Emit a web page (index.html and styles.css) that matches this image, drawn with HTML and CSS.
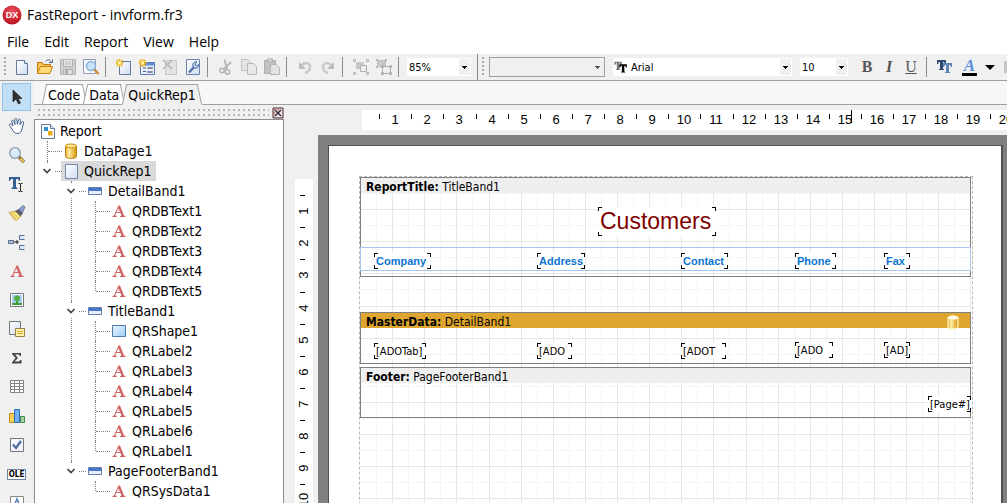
FILE: index.html
```html
<!DOCTYPE html>
<html lang="en">
<head>
<meta charset="utf-8">
<title>FastReport - invform.fr3</title>
<link rel="stylesheet" href="styles.css">
</head>
<body>
<svg class="sprite" aria-hidden="true">
  <defs>
    <linearGradient id="gPaper" x1="0" y1="0" x2="1" y2="1"><stop offset="0" stop-color="#fff"/><stop offset="1" stop-color="#cfdcf3"/></linearGradient>
    <linearGradient id="gGold" x1="0" y1="0" x2="1" y2="0"><stop offset="0" stop-color="#e0a21a"/><stop offset=".3" stop-color="#fff0a8"/><stop offset="1" stop-color="#d8930c"/></linearGradient>
    <linearGradient id="gBlue" x1="0" y1="0" x2="1" y2="1"><stop offset="0" stop-color="#eaf6ff"/><stop offset="1" stop-color="#9fcdf5"/></linearGradient>
    <radialGradient id="gRed" cx=".5" cy=".35" r=".65"><stop offset="0" stop-color="#f05660"/><stop offset="1" stop-color="#b9101d"/></radialGradient>
  </defs>
  <symbol id="new" viewBox="0 0 18 18"><path d="M3.5 2.5h8l3 3v11h-11z" fill="url(#gPaper)" stroke="#64789c"/><path d="M11.5 2.5v3h3" fill="#fff" stroke="#64789c"/></symbol>
  <symbol id="open" viewBox="0 0 18 18"><path d="M1.500 15.500v-11h5l1 2h7v3" fill="#f5c14b" stroke="#c07d16"/><path d="M1.500 15.500l3-7h12l-2.500 7z" fill="#ffdb78" stroke="#c98617"/><path d="M9.500 3.500c2-2.500 4.500-2 5.500 0m1.500-2v3h-3.500" fill="none" stroke="#48648c"/></symbol>
  <symbol id="save" viewBox="0 0 18 18"><path d="M1.500 1.500h15v15h-15z" fill="#cecece" stroke="#b4b4b4"/><path d="M4.500 1.500h9v7h-9z" fill="#e6e6e6" stroke="#b5b5b5"/><path d="M6 4h6M6 6h6" stroke="#bbb"/><path d="M4.500 11.500h9v5h-9z" fill="#ddd" stroke="#b0b0b0"/><path d="M6 12h3v4H6z" fill="#b0b0b0"/></symbol>
  <symbol id="preview" viewBox="0 0 18 18"><path d="M1.500 1.500h12v14h-12z" fill="#f8faff" stroke="#8e9ab2"/><path d="M12 11l4.500 5" stroke="#c98d35" stroke-width="2.500"/><circle cx="9" cy="8" r="4.500" fill="#c8e4fb" stroke="#8db2dc" stroke-width="1.500"/></symbol>
  <symbol id="newpage" viewBox="0 0 18 18"><path d="M4.500 3.500h11v13h-11z" fill="url(#gPaper)" stroke="#64789c"/><path d="M4.500 1v8M.500 5h8M1.500 2l6 6M7.500 2l-6 6" stroke="#e9b71c" stroke-width="1.500"/><path d="M3 3.500h3v3H3z" fill="#fff1a0"/></symbol>
  <symbol id="newdlg" viewBox="0 0 18 18"><path d="M2.500 4.500h14v12h-14z" fill="#e8eefb" stroke="#5c7db3"/><path d="M3 5h13v2.500H3z" fill="#5f8fd8"/><path d="M5 10h3M5 13.500h3" stroke="#4d5f7e"/><path d="M9.500 9.500h5v1h-5zM9.500 13.500h5v1h-5z" fill="#fff" stroke="#88a"/><path d="M4.500 1v8M.500 5h8M1.500 2l6 6M7.500 2l-6 6" stroke="#e9b71c" stroke-width="1.500"/><path d="M3 3.500h3v3H3z" fill="#fff1a0"/></symbol>
  <symbol id="delpage" viewBox="0 0 18 18"><path d="M4.500 2.500h11v14h-11z" fill="#e2e2e2" stroke="#c8c8c8"/><path d="M2 2l9 9M11 2l-9 9" stroke="#b6b6b6" stroke-width="1.500"/></symbol>
  <symbol id="settings" viewBox="0 0 18 18"><path d="M2.500 1.500h13v15h-13z" fill="url(#gPaper)" stroke="#6c83ab"/><path d="M5 14.500L10 9" stroke="#5173a5" stroke-width="2.500"/><path d="M9 8c-1-3 2-5 4-4l-2 2 1.500 2L15 6c1 3-3 5-5 4z" fill="#bdd1ef" stroke="#4e6e9f"/></symbol>
  <symbol id="cut" viewBox="0 0 18 18"><path d="M7.500 1.500l2.500 10M14 4l-7 7" stroke="#b8b8b8" stroke-width="2" fill="none"/><circle cx="5" cy="12.500" r="2.200" fill="none" stroke="#b4b4b4" stroke-width="1.500"/><circle cx="10.500" cy="14" r="2.200" fill="none" stroke="#b4b4b4" stroke-width="1.500"/></symbol>
  <symbol id="copy" viewBox="0 0 18 18"><path d="M1.500 1.500h6l3 3v8h-9z" fill="#e4e4e4" stroke="#c2c2c2"/><path d="M7.500 5.500h6l3 3v8h-9z" fill="#e8e8e8" stroke="#b8b8b8"/></symbol>
  <symbol id="paste" viewBox="0 0 18 18"><path d="M1.500 2.500h11v13h-11z" fill="#c2c2c2" stroke="#adadad"/><path d="M4.500 1h5v3h-5z" fill="#d8d8d8" stroke="#adadad"/><path d="M7.500 6.500h6l3 3v7h-9z" fill="#e3e3e3" stroke="#b4b4b4"/></symbol>
  <symbol id="undo" viewBox="0 0 18 18"><path d="M5 8c4-5 9-3 9 1 0 3-2 5-5 6" fill="none" stroke="#cacaca" stroke-width="2.500"/><path d="M3 4v7h7z" fill="#bcbcbc"/></symbol>
  <symbol id="redo" viewBox="0 0 18 18"><path d="M13 8c-4-5-9-3-9 1 0 3 2 5 5 6" fill="none" stroke="#cacaca" stroke-width="2.500"/><path d="M15 4v7H8z" fill="#bcbcbc"/></symbol>
  <symbol id="group" viewBox="0 0 18 18"><path d="M4 4h8v7H4z" fill="#c8c8c8"/><path d="M8.500 7.500h6v6h-6z" fill="#eee" stroke="#b0b0b0"/><path d="M1.500 1.500h2v2h-2zM14.500 1.500h2v2h-2zM1.500 14.500h2v2h-2zM14.500 14.500h2v2h-2z" fill="#eee" stroke="#b0b0b0"/></symbol>
  <symbol id="ungroup" viewBox="0 0 18 18"><path d="M2.500 2.500h8v6h-8z" fill="#c8c8c8" stroke="#b4b4b4" stroke-dasharray="2 1"/><path d="M7.500 8.500h8v7h-8z" fill="#eee" stroke="#b0b0b0"/><path d="M1 1h2v2H1zM10 1h2v2h-2zM1 8h2v2H1zM6 7h3v3H6zM14 7h3v3h-3zM6 14h3v3H6zM14 14h3v3h-3z" fill="#b6b6b6"/></symbol>
  <symbol id="cursor" viewBox="0 0 18 18"><path d="M5 2v12l3-3 2.500 5 2-1-2.300-4.500H14z" fill="#333" stroke="#111" stroke-width=".6"/></symbol>
  <symbol id="hand" viewBox="0 0 18 18"><path d="M4 12L1.500 8.500c-.8-1.300 1-2 1.800-1L5 9 3.700 4.500c-.3-1.500 1.500-1.800 2-.5L7 7.500 6.800 2.500c0-1.500 2-1.500 2.100 0l.4 4.800L10.500 3c.4-1.300 2-1 1.900.4l-.5 4.500 2-2.900c.8-1 2.300-.3 1.700 1L14 12c-.6 3-2 4.500-4.500 4.500S5.500 15 4 12z" fill="#fff" stroke="#405f8c"/></symbol>
  <symbol id="zoom" viewBox="0 0 18 18"><path d="M11 11l5 5" stroke="#8d713b" stroke-width="3.500"/><path d="M12.500 12.500l3 3" stroke="#f1c95c" stroke-width="2"/><circle cx="7" cy="7" r="5.300" fill="#d7eafa" stroke="#8c9aac" stroke-width="1.300"/><path d="M4 6c.5-1.500 2-2.500 4-2" stroke="#fff" fill="none"/></symbol>
  <symbol id="textedit" viewBox="0 0 18 18"><path d="M1 2h11v4h-1l-1-2H8v8l1.500 1v1h-6v-1L5 12V4H3L2 6H1z" fill="#355e91"/><path d="M10.500 8.500h1.500l.500.500.500-.5h1.500M12.500 9v7M10.500 16.500h1.500l.500-.5.500.5h1.500" stroke="#222" fill="none"/></symbol>
  <symbol id="brush" viewBox="0 0 18 18"><path d="M1 8.500L8 7l5 5-4.500 4.500L6 15z" fill="#f8e47e" stroke="#c2a552"/><path d="M7 7l4-2 4 4-2.500 3.500z" fill="#5d5a5c"/><path d="M10.500 5.500L15 1.500l2 1.500-2.500 6z" fill="#8b9bcd" stroke="#52608c" stroke-width=".7"/><path d="M3 9l4.500 5M5.500 8.500l4 5" stroke="#e0bd52"/></symbol>
  <symbol id="branch" viewBox="0 0 18 18"><path d="M.500 7.500h5v3h-5z" fill="#b2c2dd" stroke="#5c6d8a"/><path d="M6 9h5M9 7v4" stroke="#222"/><path d="M16.500 2.500h-5v4h5M16.500 12.500h-5v4h5" fill="#d8e7f8" stroke="#5c7197"/></symbol>
  <symbol id="letter" viewBox="0 0 18 18"><path d="M8.500 3.500h1.500l4 10 1.500.5v1H10v-1l1.500-.5-1-2.500H6.200l-1 2.500 1.500.5v1H2.500v-1l1.500-.5zM8.300 6.200L6.600 10h3.400z" fill="#d06464"/></symbol>
  <symbol id="picture" viewBox="0 0 18 18"><path d="M2.500 2.500h13v13h-13z" fill="#fff" stroke="#777"/><path d="M4 4h10v10H4z" fill="#a7cff0"/><path d="M4 12h10v2H4zM8 9h2v4H8z" fill="#3f9b39"/><circle cx="9" cy="7.500" r="3" fill="#55ae43"/></symbol>
  <symbol id="subreport" viewBox="0 0 18 18"><path d="M1.500 1.500h11v13h-11z" fill="url(#gPaper)" stroke="#777"/><path d="M7.500 8.500h9v8h-9z" fill="#fff3b2" stroke="#9b8242"/><path d="M9 11.500h6M9 13.500h6" stroke="#d4a62b"/></symbol>
  <symbol id="sigma" viewBox="0 0 18 18"><path d="M4 4h9v3h-1l-1-1.500H7L10 9l-3.500 3.500H11l1.500-1.500H13.500v3.500H4v-1L7.500 9 4 5z" fill="#444"/></symbol>
  <symbol id="table" viewBox="0 0 18 18"><path d="M2.500 2.500h13v12h-13zM2.500 5.500h13M2.500 8.500h13M2.500 11.500h13M6.500 2.500v12M11.500 2.500v12" fill="#fff" stroke="#858585"/></symbol>
  <symbol id="chart" viewBox="0 0 18 18"><path d="M1.500 6.500h5v9h-5z" fill="#f7cf55" stroke="#c28c19"/><path d="M6.500 2.500h5v13h-5z" fill="#72aef2" stroke="#2e68b7"/><path d="M12.500 9.500h4v6h-4z" fill="#a3d6a0" stroke="#408b4c"/></symbol>
  <symbol id="check" viewBox="0 0 18 18"><path d="M2.500 2.500h13v13h-13z" fill="#f2f5fb" stroke="#777"/><path d="M5 8.500l3 3.500 5-7" fill="none" stroke="#4f70a6" stroke-width="2.300"/></symbol>
  <symbol id="rich" viewBox="0 0 18 18"><path d="M2.500 2.500h13v13h-13z" fill="#fff" stroke="#888"/><path d="M6 12l3-7 3 7M7 10h4" fill="none" stroke="#5681b9" stroke-width="1.500"/></symbol>
  <symbol id="report" viewBox="0 0 18 18"><path d="M2.500 2.500h9l4 4v10h-13z" fill="#fff" stroke="#64789c"/><path d="M11.500 2.500v4h4" fill="#dce8fa" stroke="#64789c"/><path d="M5 5h4v4H5z" fill="#2c8fd6"/><path d="M9 9h4.500v4.500H9z" fill="#e9ae12"/></symbol>
  <symbol id="data" viewBox="0 0 18 18"><path d="M3.500 4v10.500c0 2.500 11 2.500 11 0V4z" fill="url(#gGold)" stroke="#be8311"/><ellipse cx="9" cy="4" rx="5.500" ry="2" fill="#ffe88f" stroke="#c68b14"/></symbol>
  <symbol id="datalink" viewBox="0 0 18 18"><path d="M3.500 4v10.500c0 2.500 11 2.500 11 0V4z" fill="url(#gGold)" stroke="#fff3b8" stroke-width="1.500"/><ellipse cx="9" cy="4" rx="5.500" ry="2" fill="#fff" stroke="#fff3b8"/></symbol>
  <symbol id="page" viewBox="0 0 18 18"><path d="M3.500 2.500h12v14h-12z" fill="url(#gPaper)" stroke="#7487aa"/></symbol>
  <symbol id="band" viewBox="0 0 18 18"><path d="M2.500 5.500h13v7h-13z" fill="#e9effa" stroke="#637faf"/><path d="M3 6h12v3H3z" fill="#4676ca"/></symbol>
  <symbol id="shape" viewBox="0 0 18 18"><path d="M2.500 3.500h13v11h-13z" fill="url(#gBlue)" stroke="#4d7ba8"/></symbol>
  <symbol id="fonts" viewBox="0 0 18 18"><path d="M1 2h9v4H9L8 4H7v7h1v1H3v-1h1V4H3L2 6H1z" fill="var(--back)"/><path d="M7 5h9v4h-1l-1-2h-1v7h1v1H9v-1h1V7H9L8 9H7z" fill="var(--front)"/></symbol>
  <symbol id="close" viewBox="0 0 12 12"><path d="M1 1h10v10H1z" fill="#e8d8d8" stroke="#4a2730"/><path d="M2 2h7l-5 5-2 3z" fill="#d07a7a"/><path d="M3 3l6 6M9 3l-6 6" stroke="#fff" stroke-width="3"/><path d="M3 3l6 6M9 3l-6 6" stroke="#2f2a35" stroke-width="1.500"/></symbol>
  <symbol id="chevron" viewBox="0 0 10 10"><path d="M1.500 3l3.500 3.500L8.500 3" fill="none" stroke="#444" stroke-width="1.700"/></symbol>
  <symbol id="caret" viewBox="0 0 10 5"><path d="M0 0h10L5 5z" fill="#000"/></symbol>
</svg>

<header class="titlebar">
  <svg class="logo" viewBox="0 0 20 20"><circle cx="10" cy="10" r="9.500" fill="url(#gRed)"/><text x="10" y="13" text-anchor="middle" class="logo-text">DX</text></svg>
  <h1>FastReport - invform.fr3</h1>
</header>
<nav class="menu">
  <button>File</button><button>Edit</button><button>Report</button><button>View</button><button>Help</button>
</nav>

<div class="toolbars">
  <div class="toolbar" role="toolbar" aria-label="Standard">
    <i class="grip"></i>
    <button aria-label="New"><svg><use href="#new"/></svg></button>
    <button aria-label="Open"><svg><use href="#open"/></svg></button>
    <button aria-label="Save"><svg><use href="#save"/></svg></button>
    <button aria-label="Preview"><svg><use href="#preview"/></svg></button>
    <i class="sep"></i>
    <button aria-label="New page"><svg><use href="#newpage"/></svg></button>
    <button aria-label="New dialog"><svg><use href="#newdlg"/></svg></button>
    <button aria-label="Delete page"><svg><use href="#delpage"/></svg></button>
    <button aria-label="Page settings"><svg><use href="#settings"/></svg></button>
    <i class="sep"></i>
    <button aria-label="Cut"><svg><use href="#cut"/></svg></button>
    <button aria-label="Copy"><svg><use href="#copy"/></svg></button>
    <button aria-label="Paste"><svg><use href="#paste"/></svg></button>
    <i class="sep"></i>
    <button aria-label="Undo"><svg><use href="#undo"/></svg></button>
    <button aria-label="Redo"><svg><use href="#redo"/></svg></button>
    <i class="sep"></i>
    <button aria-label="Group"><svg><use href="#group"/></svg></button>
    <button aria-label="Ungroup"><svg><use href="#ungroup"/></svg></button>
    <i class="sep"></i>
    <select class="combo zoom-combo" aria-label="Zoom"><option>85%</option></select>
  </div>
  <div class="toolbar text-bar" role="toolbar" aria-label="Text">
    <i class="grip"></i>
    <select class="combo style-combo" aria-label="Style" disabled><option></option></select>
    <label class="font-field"><svg class="font-mark"><use href="#fonts"/></svg><select class="combo font-combo" aria-label="Font"><option>Arial</option></select></label>
    <select class="combo size-combo" aria-label="Font size"><option>10</option></select>
    <span class="format"><button class="bold">B</button><button class="italic">I</button><button class="under">U</button></span>
    <i class="sep"></i>
    <button class="font-btn" aria-label="Font settings"><svg><use href="#fonts"/></svg></button>
    <button class="color-btn" aria-label="Font colour">A</button>
    <button class="caret-btn" aria-label="More colours"><svg><use href="#caret"/></svg></button>
    <i class="highlight"></i>
  </div>
</div>

<main class="work">
  <aside class="tools" role="toolbar" aria-label="Objects">
    <button class="on" aria-label="Select"><svg><use href="#cursor"/></svg></button>
    <button aria-label="Hand"><svg><use href="#hand"/></svg></button>
    <button aria-label="Zoom"><svg><use href="#zoom"/></svg></button>
    <button aria-label="Edit text"><svg><use href="#textedit"/></svg></button>
    <button aria-label="Copy format"><svg><use href="#brush"/></svg></button>
    <button aria-label="Insert band"><svg><use href="#branch"/></svg></button>
    <button aria-label="Text"><svg><use href="#letter"/></svg></button>
    <button aria-label="Picture"><svg><use href="#picture"/></svg></button>
    <button aria-label="Subreport"><svg><use href="#subreport"/></svg></button>
    <button aria-label="System text"><svg><use href="#sigma"/></svg></button>
    <button aria-label="Table"><svg><use href="#table"/></svg></button>
    <button aria-label="Chart"><svg><use href="#chart"/></svg></button>
    <button aria-label="Check box"><svg><use href="#check"/></svg></button>
    <button><span class="ole">OLE</span></button>
    <button aria-label="Rich text"><svg><use href="#rich"/></svg></button>
  </aside>

  <div class="main">
    <div class="tabs" role="tablist">
      <button role="tab" class="tab">Code</button><button role="tab" class="tab">Data</button><button role="tab" class="tab active" aria-selected="true">QuickRep1</button>
    </div>
    <div class="split">
      <section class="panel">
        <div class="panel-head"><i class="dots"></i><button aria-label="Close"><svg><use href="#close"/></svg></button></div>
        <ul class="tree">
          <li><span class="node"><svg><use href="#report"/></svg>Report</span>
            <ul>
              <li><span class="node"><svg><use href="#data"/></svg>DataPage1</span></li>
              <li><svg class="chev"><use href="#chevron"/></svg><span class="node selected"><svg><use href="#page"/></svg>QuickRep1</span>
                <ul>
                  <li><svg class="chev"><use href="#chevron"/></svg><span class="node"><svg><use href="#band"/></svg>DetailBand1</span>
                    <ul>
                      <li><span class="node"><svg><use href="#letter"/></svg>QRDBText1</span></li>
                      <li><span class="node"><svg><use href="#letter"/></svg>QRDBText2</span></li>
                      <li><span class="node"><svg><use href="#letter"/></svg>QRDBText3</span></li>
                      <li><span class="node"><svg><use href="#letter"/></svg>QRDBText4</span></li>
                      <li><span class="node"><svg><use href="#letter"/></svg>QRDBText5</span></li>
                    </ul>
                  </li>
                  <li><svg class="chev"><use href="#chevron"/></svg><span class="node"><svg><use href="#band"/></svg>TitleBand1</span>
                    <ul>
                      <li><span class="node"><svg><use href="#shape"/></svg>QRShape1</span></li>
                      <li><span class="node"><svg><use href="#letter"/></svg>QRLabel2</span></li>
                      <li><span class="node"><svg><use href="#letter"/></svg>QRLabel3</span></li>
                      <li><span class="node"><svg><use href="#letter"/></svg>QRLabel4</span></li>
                      <li><span class="node"><svg><use href="#letter"/></svg>QRLabel5</span></li>
                      <li><span class="node"><svg><use href="#letter"/></svg>QRLabel6</span></li>
                      <li><span class="node"><svg><use href="#letter"/></svg>QRLabel1</span></li>
                    </ul>
                  </li>
                  <li><svg class="chev"><use href="#chevron"/></svg><span class="node"><svg><use href="#band"/></svg>PageFooterBand1</span>
                    <ul>
                      <li><span class="node"><svg><use href="#letter"/></svg>QRSysData1</span></li>
                    </ul>
                  </li>
                </ul>
              </li>
            </ul>
          </li>
        </ul>
      </section>

      <section class="designer">
        <div class="ruler-h"><i class="pointer"></i></div>
        <div class="ruler-v"></div>
        <div class="desk">
          <div class="paper">
            <div class="margins">
              <svg class="grid-lines" aria-hidden="true"></svg>
              <article class="band title-band">
                <h2><b>ReportTitle:</b> TitleBand1</h2>
                <div class="shape-box"></div>
                <span class="obj customers">Customers</span>
                <span class="obj label c1">Company</span>
                <span class="obj label c2">Address</span>
                <span class="obj label c3">Contact</span>
                <span class="obj label c4">Phone</span>
                <span class="obj label c5">Fax</span>
              </article>
              <article class="band master-band">
                <h2><b>MasterData:</b> DetailBand1<svg class="db"><use href="#datalink"/></svg></h2>
                <span class="obj c1 w1">[ADOTab]</span>
                <span class="obj c2 w2">[ADO</span>
                <span class="obj c3 w3">[ADOT</span>
                <span class="obj c4 w4">[ADO</span>
                <span class="obj c5">[AD]</span>
              </article>
              <article class="band footer-band">
                <h2><b>Footer:</b> PageFooterBand1</h2>
                <span class="obj pageno">[Page#]</span>
              </article>
            </div>
          </div>
        </div>
      </section>
    </div>
  </div>
</main>
<script src="main.js"></script>
</body>
</html>
```
FILE: styles.css
```css
* { box-sizing: border-box; }
html, body { height: 100%; }
body {
  margin: 0;
  display: flex;
  flex-direction: column;
  overflow: hidden;
  background: #f0f0f0;
  color: #000;
  font-family: "DejaVu Sans Condensed", "DejaVu Sans", sans-serif;
  font-size: 14px;
}
button { border: 0; padding: 0; margin: 0; background: none; color: inherit; font: inherit; }
.sprite { position: absolute; width: 0; height: 0; }

.titlebar { display: flex; align-items: center; gap: 5px; height: 29px; padding-left: 2px; background: #fff; flex: none; }
.logo { width: 20px; height: 20px; }
.logo-text { font: bold 9px "Liberation Sans", sans-serif; fill: #fff; }
.titlebar h1 { margin: 0; font: 14px "Open Sans", sans-serif; }
.menu { display: flex; gap: 15px; height: 24px; padding-left: 7px; background: #fff; font: 14px "Open Sans", sans-serif; flex: none; }

.toolbars { display: flex; height: 28px; border-bottom: 1px solid #a0a0a0; border-top: 1px solid #fff; flex: none; overflow: hidden; }
.toolbar { display: flex; align-items: center; flex: none; padding-left: 4px; }
.toolbar button { width: 23px; height: 24px; display: flex; align-items: center; justify-content: center; flex: none; }
.toolbar button svg { width: 18px; height: 18px; }
.grip { width: 3px; height: 20px; margin-right: 3px; background: radial-gradient(circle at 1px 1px, #aaa 1px, transparent 1px) 0 0 / 3px 4px; flex: none; }
.sep { width: 1px; height: 20px; margin: 0 6px 0 3px; background: #8c8c8c; flex: none; }
.combo {
  --ink: linear-gradient(#000, #000);
  appearance: none;
  height: 18px;
  padding: 0 0 0 2px;
  border: 0;
  border-radius: 0;
  color: #000;
  font: 11px "DejaVu Sans Condensed", sans-serif;
  background:
    var(--ink) right 4px top 8px / 5px 1px,
    var(--ink) right 5px top 9px / 3px 1px,
    var(--ink) right 6px top 10px / 1px 1px,
    linear-gradient(#f0f0f0, #f0f0f0) right 1px center / 11px 16px,
    #fff;
  background-repeat: no-repeat;
  flex: none;
}
.zoom-combo { width: 64px; margin: 0 6px 0 2px; }
.text-bar { border-left: 1px solid #8c8c8c; padding-left: 4px; }
.style-combo { --ink: linear-gradient(#555, #555); width: 116px; height: 20px; border: 1px solid #a0a0a0; background-color: #f0f0f0; opacity: 1; margin: 0 8px 0 1px; }
.font-field { display: flex; align-items: center; background: #fff; height: 18px; --back: #777; --front: #000; }
.font-mark { width: 16px; height: 15px; }
.font-combo { width: 163px; }
.size-combo { width: 48px; margin: 0 8px; }
.format { display: flex; font: 16px "Liberation Serif", serif; color: #555; }
.toolbar .format button { width: 22px; }
.bold { font-weight: bold; }
.italic { font-style: italic; font-weight: bold; }
.under { text-decoration: underline; }
.text-bar .sep { margin: 0 6px 0 4px; }
.font-btn { --back: #2f4d70; --front: #6285b6; }
.toolbar .color-btn { font: italic bold 17px "Liberation Serif", serif; color: #5c8fdd; width: 15px; height: 18px; border-bottom: 3px solid #000; margin: 0 8px 0 6px; }
.toolbar .caret-btn { width: 10px; }
.toolbar .caret-btn svg { width: 10px; height: 5px; }
.highlight { width: 16px; height: 12px; margin-left: 9px; background: #c6c6c6; }

.work { display: flex; flex: 1; min-height: 0; }
.tools { width: 34px; flex: none; padding: 2px; display: flex; flex-direction: column; gap: 1px; overflow: hidden; }
.tools button { width: 29px; height: 28px; flex: none; display: flex; align-items: center; justify-content: center; border: 1px solid transparent; }
.tools svg { width: 18px; height: 18px; }
.tools .on { background: #c3dff5; border-color: #92c3ec; }
.ole { padding: 0 1px; border: 1px solid #6d84a5; background: #fff; font: bold 8px/9px "DejaVu Sans Condensed", sans-serif; }

.main { flex: 1; min-width: 0; display: flex; flex-direction: column; }
.tabs { display: flex; height: 24px; padding: 3px 0 0 10px; flex: none; border-bottom: 1px solid #a0a0a0; background: repeating-conic-gradient(#fff 0 25%, #efefef 0 50%) 0 0 / 2px 2px; }
.tab { position: relative; z-index: 0; height: 21px; padding: 1px 4px 0; margin-right: 1px; }
.tab::before, .tab::after { content: ""; position: absolute; z-index: -1; top: 0; bottom: 0; width: 51%; background: #fff; border: 1px solid #a0a0a0; }
.tab::before { left: 0; border-right: 0; transform: skewX(-12deg); }
.tab::after { right: 0; border-left: 0; transform: skewX(12deg); }
.tab.active::before, .tab.active::after { background: #f0f0f0; border-bottom-color: #f0f0f0; }

.split { display: flex; flex: 1; min-height: 0; }
.panel { width: 250px; flex: none; display: flex; flex-direction: column; }
.panel-head { display: flex; align-items: center; gap: 3px; height: 14px; padding: 2px 0 0 4px; flex: none; }
.panel-head button { width: 12px; height: 12px; }
.panel-head svg { display: block; width: 12px; height: 12px; }
.dots { flex: 1; height: 9px; background: radial-gradient(circle at 1px 1px, #b5b5b5 1px, transparent 1px) 0 0 / 5px 5px; }
.tree { flex: 1; overflow: hidden; margin: 0; padding: 1px 0 0 4px; list-style: none; background: #fff; border: 1px solid #8c8c8c; border-width: 1px 1px 0 1px; }
.tree ul { list-style: none; margin: 0; padding: 0; }
.tree ul ul { margin-left: 24px; }
.tree > li > ul { margin-left: 8px; }
.tree li { position: relative; }
.node { display: inline-flex; align-items: center; gap: 3px; height: 20px; padding-right: 4px; vertical-align: top; white-space: nowrap; }
.node svg { width: 18px; height: 18px; flex: none; }
.tree ul .node { margin-left: 14px; padding-left: 1px; gap: 4px; }
.node.selected { background: #d9d9d9; }
.tree ul li::before { content: ""; position: absolute; left: 0; top: 0; bottom: 0; border-left: 1px dotted #808080; }
.tree ul li:last-child::before { bottom: auto; height: 10px; }
.tree ul li::after { content: ""; position: absolute; left: 1px; top: 10px; width: 14px; border-top: 1px dotted #808080; }
.tree .chev { position: absolute; z-index: 1; left: -7px; top: 3px; width: 14px; height: 14px; padding: 2px; background: #fff; }

.designer { flex: 1; min-width: 0; display: grid; grid-template-columns: 18px 1fr; grid-template-rows: 20px 1fr; column-gap: 5px; row-gap: 5px; padding: 5px 0 0 11px; overflow: hidden; }
.ruler-h { grid-column: 2; margin-left: 44px; background: #fff; position: relative; overflow: hidden; font: 13px/19px "Liberation Sans", sans-serif; }
.ruler-v { grid-column: 1; margin-top: 44px; background: #fff; position: relative; overflow: hidden; font: 13px/18px "Liberation Sans", sans-serif; }
.pointer { position: absolute; left: 489px; top: 0; width: 1px; height: 13px; background: #000; }
.mark { position: absolute; width: 32px; text-align: center; }
.ruler-h .mark::before { content: ""; position: absolute; left: 0; top: 4px; width: 1px; height: 5px; background: #000; }
.ruler-v .mark { left: -7px; height: 18px; transform: rotate(-90deg); }
.ruler-v .mark::before { content: ""; position: absolute; right: 0; top: 5px; width: 1px; height: 5px; background: #000; }

.desk { grid-column: 2; background: #808080; padding: 10px 0 0 10px; overflow: hidden; }
.paper { width: 675px; height: 955px; padding: 30px; background: #fff; border: 1px solid #505050; border-right-width: 2px; }
.margins { position: relative; width: 614px; height: 880px; border: 1px dashed #b8b8b8; padding-right: 1px; display: flex; flex-direction: column; }
.grid-lines { position: absolute; inset: 0; width: 611px; height: 880px; shape-rendering: crispEdges; }
.band { position: relative; border: 1px solid #808080; flex: none; }
.band h2 { margin: 0; height: 15px; padding-left: 5px; font: 12px/18px "DejaVu Sans Condensed", sans-serif; background: #efefef; white-space: nowrap; }
.title-band { height: 100px; margin-bottom: 35px; }
.master-band { height: 52px; margin-bottom: 3px; }
.master-band h2 { background: #dfa62f; }
.footer-band { height: 51px; }
.db { position: absolute; right: 9px; top: 1px; width: 16px; height: 16px; }
.shape-box { position: absolute; left: -1px; right: -1px; top: 69px; height: 24px; border: 1px solid #a6c6ec; }
.obj {
  --k: linear-gradient(#000, #000);
  position: absolute;
  height: 16px;
  padding: 0 2px;
  font: 11px/17px "DejaVu Sans Condensed", sans-serif;
  white-space: nowrap;
  background: var(--k) 0 0 / 4px 1px, var(--k) 0 0 / 1px 4px, var(--k) 100% 0 / 4px 1px, var(--k) 100% 0 / 1px 4px, var(--k) 0 100% / 4px 1px, var(--k) 0 100% / 1px 4px, var(--k) 100% 100% / 4px 1px, var(--k) 100% 100% / 1px 4px, #fff;
  background-repeat: no-repeat;
}
.label { top: 75px; font: bold 11px/16px "Liberation Sans", sans-serif; color: #0b74d1; }
.customers { left: 237px; top: 29px; width: 118px; height: 29px; font: 23px/28px "Liberation Sans", sans-serif; color: #800000; }
.c1 { left: 13px; width: 57px; }
.c2 { left: 176px; width: 48px; }
.c3 { left: 320px; width: 47px; }
.c4 { left: 434px; width: 41px; }
.c5 { left: 523px; width: 26px; }
.master-band .obj { top: 30px; }
.master-band .c4, .master-band .c5 { top: 29px; }
.w1 { width: 52px; }
.w2 { width: 35px; }
.w3 { width: 45px; }
.w4 { width: 38px; }
.pageno { right: -1px; top: 28px; width: 43px; }
```
FILE: main.js
```js
// One centimetre on screen at 85% zoom.
const CM = 32.13;

function fillRuler(el, side, count) {
  for (let n = 1; n <= count; n++) {
    const mark = document.createElement("span");
    mark.className = "mark";
    mark.textContent = n;
    const pos = Math.round(CM * n - 15);
    mark.style[side] = (side === "top" ? pos + 6 : pos) + "px";
    el.append(mark);
  }
}
fillRuler(document.querySelector(".ruler-h"), "left", 20);
fillRuler(document.querySelector(".ruler-v"), "top", 10);

const grid = document.querySelector(".grid-lines");
function line(x, y, w, h, major) {
  const r = document.createElementNS("http://www.w3.org/2000/svg", "rect");
  r.setAttribute("x", x);
  r.setAttribute("y", y);
  r.setAttribute("width", w);
  r.setAttribute("height", h);
  r.setAttribute("fill", major ? "#e6e6e6" : "#f5f5f5");
  grid.append(r);
}
for (const major of [false, true]) {
  for (let i = major ? 2 : 1; i < 55; i += 2) {
    const p = Math.round(i * CM / 2);
    if (p < 611) line(p, 0, 1, 880, major);
    line(0, p, 611, 1, major);
  }
}
```
